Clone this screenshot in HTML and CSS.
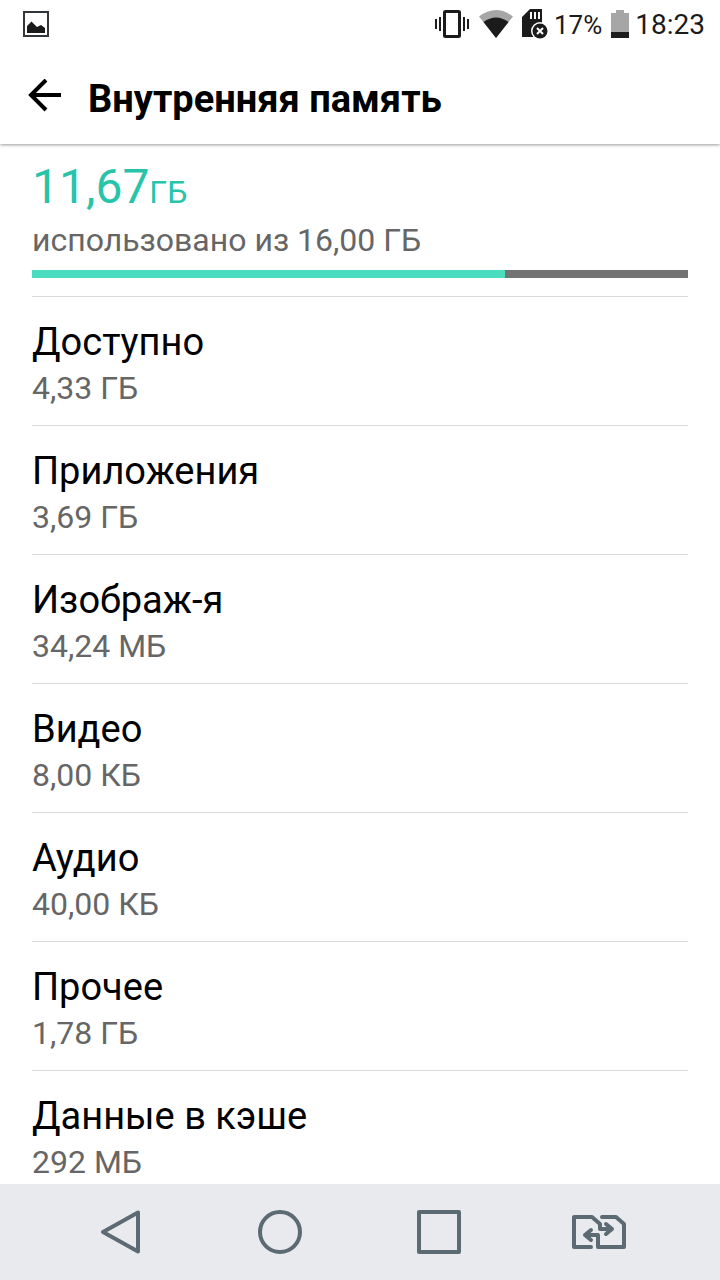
FILE: index.html
```html
<!DOCTYPE html>
<html lang="ru">
<head>
<meta charset="utf-8">
<meta name="viewport" content="width=device-width, initial-scale=1">
<title>Внутренняя память</title>
<link rel="stylesheet" href="styles.css">
</head>
<body>
<div class="status">
  <svg class="status-photo" width="26" height="26" viewBox="0 0 26 26" aria-hidden="true"><rect x="1" y="1" width="24" height="24" fill="none" stroke="#333638" stroke-width="2"/><path d="M4 22v-7l4.500-4.500L14 16l4-2 4 3v5z" fill="#1b1b1b"/></svg>
  <div class="status-right">
    <svg width="34" height="28" viewBox="0 0 34 28" fill="none" stroke="#1b1b1b" aria-hidden="true"><rect x="9.500" y="1.500" width="15" height="25" rx="1" stroke-width="3"/><path d="M1 9v10M5 7v14M29 7v14M33 9v10" stroke-width="2"/></svg>
    <svg class="wifi" width="34" height="28" viewBox="0 0 34 28" aria-hidden="true"><path d="M0 6.500Q17-6.500 34 6.500L17 28z" fill="#a6a6a6"/><path d="M4.500 12Q17 3 29.500 12L17 28z" fill="#1b1b1b"/></svg>
    <svg class="card" width="26" height="30" viewBox="0 0 26 30" aria-hidden="true"><path d="M8 0h12v28H0V8z" fill="#1b1b1b"/><path d="M9 3v7M13 3v7M17 3v7" stroke="#fff" stroke-width="2"/><circle cx="18" cy="22" r="9" fill="#fff"/><circle cx="18" cy="22" r="7.500" fill="#1b1b1b"/><path d="M15 19l6 6M21 19l-6 6" stroke="#fff" stroke-width="2"/></svg>
    <span class="percent">17%</span>
    <svg class="battery" width="18" height="28" viewBox="0 0 18 28" aria-hidden="true"><path d="M5 0h8v3h5v19H0V3h5z" fill="#a6a6a6"/><path d="M0 22h18v6H0z" fill="#1b1b1b"/></svg>
    <time class="clock">18:23</time>
  </div>
</div>
<header class="header">
  <button class="back" aria-label="Назад"><svg width="34" height="34" viewBox="0 0 34 34" fill="none" stroke="#000" stroke-width="4" aria-hidden="true"><path d="M33 16H3M18 1L3 16l15 15"/></svg></button>
  <h1 class="title">Внутренняя память</h1>
</header>
<main class="content">
  <section class="summary">
    <p class="used">11,67<span class="unit">ГБ</span></p>
    <p class="total" id="total">использовано из 16,00 ГБ</p>
    <progress class="usage" value="72.1" max="100" aria-labelledby="total"></progress>
  </section>
  <ul class="list">
    <li class="row"><h2 class="name">Доступно</h2><p class="size">4,33 ГБ</p></li>
    <li class="row"><h2 class="name">Приложения</h2><p class="size">3,69 ГБ</p></li>
    <li class="row"><h2 class="name">Изображ-я</h2><p class="size">34,24 МБ</p></li>
    <li class="row"><h2 class="name">Видео</h2><p class="size">8,00 КБ</p></li>
    <li class="row"><h2 class="name">Аудио</h2><p class="size">40,00 КБ</p></li>
    <li class="row"><h2 class="name">Прочее</h2><p class="size">1,78 ГБ</p></li>
    <li class="row"><h2 class="name">Данные в кэше</h2><p class="size">292 МБ</p></li>
  </ul>
</main>
<nav class="nav">
  <button class="nav-button" aria-label="Назад"><svg width="56" height="48" viewBox="0 0 56 48"><path d="M45 4.500v39L10 24z"/></svg></button>
  <button class="nav-button" aria-label="Домой"><svg width="56" height="48" viewBox="0 0 56 48"><circle cx="28" cy="24" r="20"/></svg></button>
  <button class="nav-button" aria-label="Недавние приложения"><svg width="56" height="48" viewBox="0 0 56 48"><path d="M8 4h40v40H8z"/></svg></button>
  <button class="nav-button" aria-label="Сменить SIM-карту"><svg width="56" height="48" viewBox="0 0 56 48"><path d="M21 39H4V9h18l8 7v5h12M36 16l6 5-6 5M32 9h14l8 7v23H28V27H15M21 22l-6 5 6 5" stroke-linecap="round"/></svg></button>
</nav>
</body>
</html>
```
FILE: styles.css
```css
* {
  box-sizing: border-box;
}

body {
  display: flex;
  flex-direction: column;
  height: 100vh;
  margin: 0;
  background: #fff;
  color: #000;
  font-family: Roboto, "Liberation Sans", sans-serif;
}

h1, h2, p, ul {
  margin: 0;
  padding: 0;
}

button {
  display: flex;
  align-items: center;
  justify-content: center;
  padding: 0;
  border: 0;
  background: none;
}

svg {
  display: block;
  flex: none;
}

.status {
  position: relative;
  z-index: 1;
  display: flex;
  flex: none;
  align-items: center;
  justify-content: space-between;
  height: 48px;
  padding: 0 15px 0 23px;
  background: #fff;
  color: #1b1b1b;
}

.status-right {
  display: flex;
  align-items: center;
}

.wifi {
  margin-left: 10px;
}

.card {
  margin-left: 9px;
}

.percent {
  padding-top: 2px;
  margin-left: 6px;
  font-size: 26px;
  line-height: 46px;
}

.battery {
  margin-left: 9px;
}

.clock {
  padding-top: 2px;
  margin-left: 6px;
  font-size: 28px;
  line-height: 46px;
}

.header {
  position: relative;
  display: flex;
  flex: none;
  align-items: center;
  gap: 26px;
  height: 96px;
  padding: 0 28px;
  background: #fff;
  box-shadow: 0 1px 3px rgba(0, 0, 0, 0.4);
}

.title {
  padding-top: 6px;
  font-size: 38px;
  font-weight: 700;
  line-height: 45px;
}

.content {
  flex: 1;
  min-height: 0;
  padding: 15px 32px 0;
  overflow-y: auto;
  scrollbar-width: none;
}

.summary {
  padding-bottom: 18px;
}

.used {
  color: #27c4aa;
  font-size: 48px;
  line-height: 56px;
}

.unit {
  font-size: 32px;
  line-height: 1;
}

.total {
  margin-top: 6px;
  color: #666;
  font-size: 32px;
  line-height: 38px;
}

.usage {
  display: block;
  width: 100%;
  height: 8px;
  margin-top: 11px;
  border: 0;
  background: #737373;
  appearance: none;
}

.usage::-webkit-progress-bar {
  background: #737373;
}

.usage::-webkit-progress-value {
  background: #4addbf;
}

.list {
  list-style: none;
}

.row {
  padding: 23px 0 18px;
  border-top: 1px solid #d9d9d9;
}

.name {
  font-size: 38px;
  font-weight: 400;
  line-height: 45px;
}

.size {
  margin-top: 4px;
  color: #666;
  font-size: 32px;
  line-height: 38px;
}

.nav {
  display: flex;
  flex: none;
  height: 96px;
  padding: 0 43px 0 41px;
  background: #e9eaed;
}

.nav-button {
  flex: 1;
}

.nav-button svg {
  fill: none;
  stroke: #5c6b73;
  stroke-width: 4;
  stroke-linejoin: round;
}
```
